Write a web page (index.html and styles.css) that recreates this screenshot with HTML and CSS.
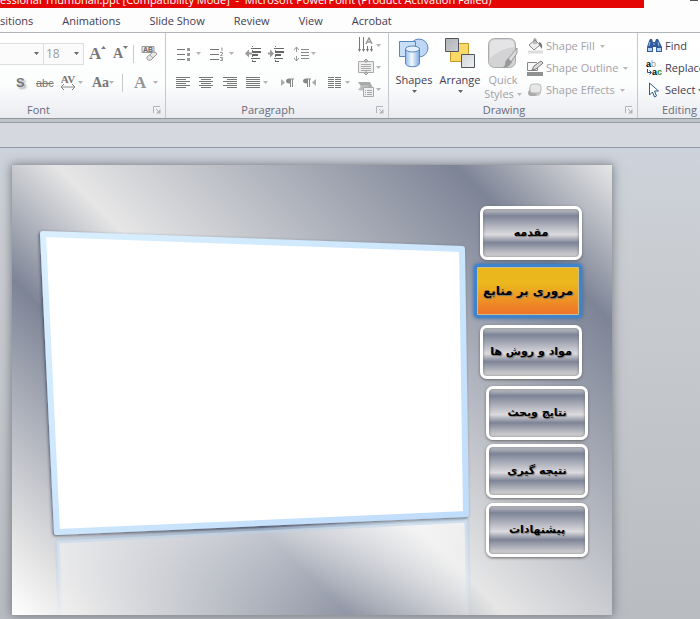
FILE: index.html
```
<!DOCTYPE html>
<html lang="en">
<head>
<meta charset="utf-8">
<title>Microsoft PowerPoint</title>
<link rel="stylesheet" href="styles.css">
</head>
<body>
<svg class="defs" aria-hidden="true">
  <symbol id="caret" viewBox="0 0 5 3"><path d="M0 0h5L2.500 3z" fill="currentColor"/></symbol>
  <symbol id="launch" viewBox="0 0 8 8"><path d="M.5 7V.5H7M3 3l3 3" fill="none" stroke="#b0b3b8"/><path d="M7.500 3v4.500H3z" fill="#b0b3b8"/></symbol>
</svg>

<header class="titlebar"><div class="title">essional Thumbnail.ppt [Compatibility Mode]&nbsp; -&nbsp; Microsoft PowerPoint (Product Activation Failed)</div><span class="minimize"></span></header>

<nav class="tabs">
  <a href="#">sitions</a><a href="#">Animations</a><a href="#">Slide Show</a><a href="#">Review</a><a href="#">View</a><a href="#">Acrobat</a>
</nav>

<main class="ribbon">
  <section class="group font-group">
    <div class="tools">
      <div class="row font-top">
        <label class="combo"><select aria-label="Font"><option></option></select><svg class="caret"><use href="#caret"/></svg></label>
        <label class="combo"><select aria-label="Font size"><option>18</option></select><svg class="caret"><use href="#caret"/></svg></label>
        <button class="glyph big">A<svg class="mark" viewBox="0 0 5 3"><path d="M0 3h5L2.500 0z" fill="#777"/></svg></button>
        <button class="glyph">A<svg class="mark"><use href="#caret"/></svg></button>
        <i class="sep"></i>
        <button aria-label="Clear formatting"><svg width="17" height="17" viewBox="0 0 17 17"><path d="M1 1.500h12v6H1z" fill="#eee" stroke="#999"/><text x="2" y="7" font-size="7" font-weight="bold" font-family="Liberation Sans" fill="#666">AB</text><path d="M6 12l6-5q4 0 4 2l-6 6q-5 1-4-3z" fill="#e6e6e6" stroke="#999"/><path d="M9 10l3 3" stroke="#aaa"/></svg></button>
      </div>
      <div class="row font-bottom">
        <button class="glyph sans shadowed">S</button>
        <button class="glyph small"><s>abc</s></button>
        <button class="glyph small spacing">AV<svg width="16" height="6" viewBox="0 0 16 6"><path d="M1 3h14M4 0L1 3l3 3M12 0l3 3-3 3" fill="none" stroke="#888"/></svg></button>
        <svg class="caret light"><use href="#caret"/></svg>
        <button class="glyph">Aa</button>
        <svg class="caret light"><use href="#caret"/></svg>
        <i class="sep"></i>
        <button class="glyph big faded">A</button>
        <svg class="caret light"><use href="#caret"/></svg>
      </div>
    </div>
    <footer><span>Font</span><svg class="launch"><use href="#launch"/></svg></footer>
  </section>

  <section class="group para-group">
    <div class="tools">
      <div class="row para-top">
        <button aria-label="Bullets"><svg width="14" height="14" viewBox="0 0 14 14"><path d="M0 2.500h8M0 7.500h8M0 12.500h8" stroke="#777"/><path d="M10 1h3v3h-3zM10 6h3v3h-3zM10 11h3v3h-3z" fill="#999"/></svg></button>
        <svg class="caret light"><use href="#caret"/></svg>
        <button aria-label="Numbering"><svg width="14" height="14" viewBox="0 0 14 14"><path d="M0 2.500h9M0 7.500h9M0 12.500h9" stroke="#777"/><path d="M11 1h1v3M10 5.500h2.500v1.500l-2 1.500h2M10 10.500h2.500v3H10M11 12h1" fill="none" stroke="#999"/></svg></button>
        <svg class="caret light"><use href="#caret"/></svg>
        <button aria-label="Decrease indent"><svg width="16" height="16" viewBox="0 0 16 16"><path d="M6 2.500h10M6 12.500h9M7 15.500h4" stroke="#666"/><path d="M7 6h9M7 9h6" stroke="#666" stroke-width="2"/><path d="M7.500 0v16" stroke="#777" stroke-dasharray="1 1"/><path d="M0 7.500l4-4v3h3v2H4v3z" fill="#999"/></svg></button>
        <button aria-label="Increase indent"><svg width="16" height="16" viewBox="0 0 16 16"><path d="M6 2.500h10M6 12.500h9M7 15.500h4" stroke="#666"/><path d="M7 6h9M7 9h6" stroke="#666" stroke-width="2"/><path d="M7.500 0v16" stroke="#777" stroke-dasharray="1 1"/><path d="M6 7.500l-4-4v3H0v2h2v3z" fill="#999"/></svg></button>
        <button aria-label="Line spacing"><svg width="16" height="16" viewBox="0 0 16 16"><path d="M7 3.500h8M7 6.500h8M7 9.500h8M7 12.500h8" stroke="#888"/><path d="M2.500 1v5M2.500 10v5M0 4l2.500-3L5 4M0 12l2.500 3L5 12" fill="none" stroke="#999"/></svg></button>
        <svg class="caret light"><use href="#caret"/></svg>
      </div>
      <div class="row para-bottom">
        <button aria-label="Align left"><svg width="14" height="12" viewBox="0 0 14 12"><path d="M0 .5h14M0 2.500h10M0 4.500h14M0 6.500h10M0 8.500h14M0 10.500h10" stroke="#777"/></svg></button>
        <button aria-label="Center"><svg width="14" height="12" viewBox="0 0 14 12"><path d="M0 .5h14M2 2.500h10M0 4.500h14M2 6.500h10M0 8.500h14M2 10.500h10" stroke="#777"/></svg></button>
        <button aria-label="Align right"><svg width="14" height="12" viewBox="0 0 14 12"><path d="M0 .5h14M4 2.500h10M0 4.500h14M4 6.500h10M0 8.500h14M4 10.500h10" stroke="#777"/></svg></button>
        <button aria-label="Justify"><svg width="14" height="12" viewBox="0 0 14 12"><path d="M0 .5h14M0 2.500h14M0 4.500h14M0 6.500h14M0 8.500h14M0 10.500h14" stroke="#777"/></svg></button>
        <svg class="caret light"><use href="#caret"/></svg>
        <button aria-label="Left to right"><svg width="13" height="10" viewBox="0 0 13 10"><path d="M0 1v7l4-3.500z" fill="#aaa"/><path d="M5 3q0-2.500 3-2.500h5v1h-1V9h-1V1.500h-1V9H9V5.500q-4 0-4-2.500z" fill="#888"/></svg></button>
        <button aria-label="Right to left"><svg width="13" height="10" viewBox="0 0 13 10"><path d="M13 1v7L9 4.500z" fill="#aaa"/><path d="M0 3Q0 .5 3 .5h5v1H7V9H6V1.500H5V9H4V5.500Q0 5.500 0 3z" fill="#888"/></svg></button>
        <button aria-label="Columns"><svg width="14" height="12" viewBox="0 0 14 12"><path d="M0 .5h6m1 0h6M0 2.500h6m1 0h6M0 4.500h6m1 0h6M0 6.500h6m1 0h6M0 8.500h6m1 0h6M0 10.500h6m1 0h6" stroke="#777"/></svg></button>
        <svg class="caret light"><use href="#caret"/></svg>
      </div>
    </div>
    <div class="stack">
      <button aria-label="Text direction"><svg width="16" height="16" viewBox="0 0 16 16"><path d="M1.500 0v14M5.500 0v14M9.500 9v5M13.500 9v5" stroke="#777"/><path d="M0 12h3l-1.500 3zM4 12h3l-1.500 3zM8 12h3l-1.500 3zM12 12h3l-1.500 3z" fill="#777"/><path d="M8 7l3-6 3 6M9 5h4" fill="none" stroke="#999" stroke-width="1.500"/></svg><svg class="caret light"><use href="#caret"/></svg></button>
      <button aria-label="Align text"><svg width="16" height="16" viewBox="0 0 16 16"><path d="M.5 2.500h15v11H.5z" fill="#eee" stroke="#aaa"/><path d="M3 5.500h10M3 7.500h10M3 9.500h10M3 11.500h10" stroke="#aaa"/><path d="M8 0v4M6 2l2-2 2 2M8 16v-4M6 14l2 2 2-2" stroke="#999" fill="none"/></svg><svg class="caret light"><use href="#caret"/></svg></button>
      <button aria-label="Convert to SmartArt"><svg width="16" height="16" viewBox="0 0 16 16"><path d="M0 1h12l3 6H4z" fill="#aaa"/><path d="M0 9l4-5h7l-3 6z" fill="#bbb"/><path d="M5.500 6.500h10v9h-10z" fill="#f0f0f0" stroke="#aaa"/><path d="M7 9.500h1M9 9.500h5M7 11.500h1M9 11.500h5M7 13.500h1M9 13.500h5" stroke="#aaa"/></svg><svg class="caret light"><use href="#caret"/></svg></button>
    </div>
    <footer><span>Paragraph</span><svg class="launch"><use href="#launch"/></svg></footer>
  </section>

  <section class="group draw-group">
    <div class="large-tools">
      <button class="large"><svg width="30" height="30" viewBox="0 0 30 30"><defs><linearGradient id="blue" x2="1"><stop stop-color="#8db9ed"/><stop offset=".45" stop-color="#f5faff"/><stop offset="1" stop-color="#79a8e0"/></linearGradient></defs><circle cx="20" cy="10" r="9" fill="#bdd7f5" stroke="#5986bd"/><path d="M.5 3.500h16v15H.5z" fill="#c9dff7" stroke="#5986bd"/><path d="M6.500 11v14c0 5 14 5 14 0V11z" fill="url(#blue)" stroke="#5986bd"/><ellipse cx="13.500" cy="11" rx="7" ry="3" fill="#e6f1fd" stroke="#5986bd"/></svg><span>Shapes</span><svg class="caret"><use href="#caret"/></svg></button>
      <button class="large"><svg width="30" height="30" viewBox="0 0 30 30"><defs><linearGradient id="steel" x2="1" y2="1"><stop stop-color="#aeb3b8"/><stop offset="1" stop-color="#eef0f2"/></linearGradient></defs><path d="M5.500 5.500h18v18h-18z" fill="#fbd968" stroke="#c59b28"/><path d="M.5.500h13v13H.5zM16.500 16.500h13v13h-13z" fill="url(#steel)" stroke="#50565c"/></svg><span>Arrange</span><svg class="caret"><use href="#caret"/></svg></button>
      <button class="large disabled"><svg width="30" height="30" viewBox="0 0 30 30"><rect x=".5" y=".5" width="27" height="29" rx="6" fill="#d3d3d5" stroke="#aaa"/><path d="M2 7q0-5 5-5h14q5 0 5 5v2Q14 10 2 20z" fill="#e4e4e6"/><path d="M29 10L20 21l3 3 6-9z" fill="#ddd" stroke="#999"/><path d="M20 20l4 4q-3 6-9 5 3-2 2-5z" fill="#999"/></svg><span>Quick</span><span class="second">Styles<svg class="caret"><use href="#caret"/></svg></span></button>
      <div class="shape-list">
        <button><svg width="16" height="16" viewBox="0 0 16 16"><path d="M1 12.500h15v3H1z" fill="#ddd"/><path d="M2 7l6-5 5 5-6 5z" fill="#eee" stroke="#888"/><path d="M7 6V1q2-1 2 1v4" fill="none" stroke="#888"/><path d="M12 4q4 1 3 7l-3-4z" fill="#777"/></svg><span>Shape Fill</span><svg class="caret"><use href="#caret"/></svg></button>
        <button><svg width="16" height="16" viewBox="0 0 16 16"><path d="M10 2.500H.5v8h10V8" fill="#f8f8f8" stroke="#888"/><path d="M5 10l2-4 7-5 2 2-7 6z" fill="#ddd" stroke="#777"/><path d="M0 12h16v4H0z" fill="#909090"/></svg><span>Shape Outline</span><svg class="caret"><use href="#caret"/></svg></button>
        <button><svg width="16" height="16" viewBox="0 0 16 16"><rect x="2" y="4" width="12" height="10" rx="4" fill="#ccc"/><rect x="1" y="8" width="9" height="6" rx="3" fill="#aaa"/><rect x="3" y="2" width="11" height="9" rx="3" fill="#e6e6e6" stroke="#bbb"/></svg><span>Shape Effects</span><svg class="caret"><use href="#caret"/></svg></button>
      </div>
    </div>
    <footer><span>Drawing</span><svg class="launch"><use href="#launch"/></svg></footer>
  </section>

  <section class="group edit-group">
    <div class="edit-list">
      <button><svg width="16" height="16" viewBox="0 0 16 16"><path d="M3 3l1-2h2l1 3h2l1-3h2l1 2 3 6v5h-6V9H7v5H1V9z" fill="#315b9d"/><path d="M2 10h4v3H2zM11 10h4v3h-4z" fill="#b8d1ef"/><path d="M4 4L3 8M12 4l1 4M7 6h2" stroke="#9dbce5"/></svg><span>Find</span></button>
      <button><svg width="16" height="16" viewBox="0 0 16 16"><g font-family="Liberation Sans" font-weight="bold" font-size="9"><text x="0" y="7">a</text><text x="5" y="7" fill="#999" font-weight="normal">b</text><text x="6" y="15">a</text><text x="11" y="15" fill="#159326">c</text></g><path d="M1.500 9v3.500H5M3.500 10.500l2 2-2 2" fill="none" stroke="#234d87"/></svg><span>Replace</span></button>
      <button><svg width="16" height="16" viewBox="0 0 16 16"><path d="M3.500 1v12l3-3 2 5 2-1-2-5h4z" fill="#fff" stroke="#315b8f"/></svg><span>Select</span><svg class="caret"><use href="#caret"/></svg></button>
    </div>
    <footer><span>Editing</span></footer>
  </section>
</main>

<div class="ribbon-edge"></div>
<div class="ruler"></div>

<div class="workspace">
  <article class="slide">
    <svg class="artwork" viewBox="0 0 600 450" aria-hidden="true">
      <defs>
        <linearGradient id="frame" x2="1" y2="1"><stop stop-color="#d9effe"/><stop offset="1" stop-color="#bfdcfb"/></linearGradient>
        <linearGradient id="fade" gradientUnits="userSpaceOnUse" x1="0" y1="355" x2="0" y2="480"><stop stop-color="#fff" stop-opacity=".6"/><stop offset="1" stop-color="#fff" stop-opacity="0"/></linearGradient>
        <linearGradient id="fade-blue" gradientUnits="userSpaceOnUse" x1="0" y1="355" x2="0" y2="450"><stop stop-color="#b8d0e8" stop-opacity=".6"/><stop offset="1" stop-color="#b8d6f3" stop-opacity=".05"/></linearGradient>
        <filter id="soft" x="-5%" y="-5%" width="110%" height="110%"><feDropShadow dx="-1" dy="1" stdDeviation="1.500" flood-color="#26344e" flood-opacity=".7"/></filter>
      </defs>
      <path d="M45 376L455 355L457 470H49z" fill="url(#fade)" stroke="url(#fade-blue)" stroke-width="5" stroke-linejoin="round"/>
      <path d="M31 69L450 84L454 349L45 367z" fill="#fff" stroke="url(#frame)" stroke-width="6" stroke-linejoin="round" filter="url(#soft)"/>
    </svg>
    <div class="slide-menu" lang="fa" dir="rtl">
      <button class="item intro">مقدمه</button>
      <button class="item review">مروری بر منابع</button>
      <button class="item methods">مواد و روش ها</button>
      <button class="item results">نتایج وبحث</button>
      <button class="item conclusion">نتیجه گیری</button>
      <button class="item proposals">پیشنهادات</button>
    </div>
  </article>
</div>
</body>
</html>
```
FILE: styles.css
```
* { box-sizing: border-box; }

body {
  margin: 0;
  min-height: 100vh;
  display: flex;
  flex-direction: column;
  overflow: hidden;
  background: #fdfdfd;
  color: #443c52;
  font: 11px/14px "Open Sans", "Noto Sans", sans-serif;
}

button {
  display: flex;
  align-items: center;
  padding: 0;
  border: 0;
  background: none;
  color: inherit;
  font: inherit;
  white-space: nowrap;
}

svg { display: block; flex: none; }
.defs { position: absolute; width: 0; height: 0; }

.caret { width: 5px; height: 3px; color: #666; }
.caret.light { color: #b4b4b4; }
.launch { width: 8px; height: 8px; }

/* Window title */
.titlebar {
  display: flex;
  justify-content: space-between;
  height: 8px;
  padding-right: 2px;
}
.title {
  display: flex;
  align-items: flex-end;
  width: 644px;
  max-width: 94%;
  height: 8px;
  padding-bottom: 2px;
  overflow: hidden;
  background: #e40505;
  color: #fff;
  line-height: 12px;
  white-space: nowrap;
}
.minimize { width: 8px; height: 1px; background: #555; }

/* Tabs */
.tabs {
  display: flex;
  align-items: center;
  gap: 29px;
  height: 25px;
  padding-top: 2px;
  border-bottom: 1px solid #b1b4b9;
}
.tabs a { color: inherit; text-decoration: none; white-space: nowrap; }

/* Ribbon */
.ribbon {
  display: grid;
  grid-template-columns: 166px 223px 249px 1fr;
  height: 85px;
  overflow: hidden;
  background: linear-gradient(#fff, #fcfdfd 60%, #e9ecf0);
}
.group {
  display: grid;
  grid-template-rows: 1fr 17px;
  border-right: 1px solid #c5c8cd;
}
.group footer {
  grid-column: 1 / -1;
  grid-row: 2;
  display: flex;
  align-items: center;
  justify-content: center;
  position: relative;
  color: #6a6a7c;
}
.group footer .launch { position: absolute; right: 4px; bottom: 4px; }

.row { display: grid; align-items: center; justify-items: start; height: 29px; }
.tools { padding-top: 6px; }

.font-top { grid-template-columns: 44px 45px 24px 20px 8px 1fr; }
.font-bottom { grid-template-columns: 20px 24px 18px 14px 17px 13px 12px 19px 1fr; padding-left: 16px; }
.font-group footer { padding-right: 88px; }

.combo {
  display: flex;
  align-items: center;
  width: 100%;
  height: 22px;
  padding-right: 4px;
  border: 1px solid #dcdee1;
  border-left: 0;
  background: #fbfbfb;
}
.font-top .combo + .combo { width: 40px; }
.combo select {
  flex: 1;
  min-width: 0;
  appearance: none;
  padding: 0 2px;
  border: 0;
  background: none;
  color: #9a9a9a;
  font: inherit;
  font-size: 12px;
}

.sep { width: 1px; height: 18px; background: #c9c9c9; }

.glyph {
  color: #777;
  font: bold 14px/16px "Liberation Serif", serif;
}
.glyph.big { font-size: 17px; }
.glyph.small { font-size: 11px; }
.glyph.sans { font-family: "Liberation Sans", sans-serif; font-size: 13px; }
.glyph.faded { color: #959595; }
.glyph.shadowed { text-shadow: 2px 2px 2px #aaa; }
.glyph s { font-family: "Liberation Sans", sans-serif; font-weight: normal; }
.glyph .mark { width: 5px; height: 3px; align-self: flex-start; }
.spacing { flex-direction: column; line-height: 9px; }

.para-group { grid-template-columns: 192px 1fr; }
.para-top { grid-template-columns: 19px 14px 19px 16px 23px 26px 17px 1fr; padding-left: 11px; }
.para-bottom { grid-template-columns: 23px 24px 23px 17px 18px 22px 25px 17px 1fr; padding-left: 10px; }
.stack { display: grid; grid-template-rows: repeat(3, 22px); padding-top: 1px; }
.stack button { gap: 2px; }
.para-group footer { padding-right: 18px; }

.large-tools { display: grid; grid-template-columns: 50px 42px 44px 1fr; }
.large {
  flex-direction: column;
  width: 52px;
  padding-top: 5px;
  justify-self: center;
}
.large > span { margin-top: 4px; line-height: 15px; }
.large > .caret { margin-top: 3px; }
.large > .second { display: flex; align-items: center; gap: 3px; margin-top: 0; line-height: 14px; }
.large.disabled, .shape-list { color: #a3a1a6; }
.large.disabled .caret, .shape-list .caret { color: #b9b9b9; }
.shape-list, .edit-list { display: grid; grid-template-rows: repeat(3, 22px); padding-top: 2px; }
.shape-list { padding-left: 2px; }
.shape-list button { gap: 3px; }
.shape-list .caret { margin-left: 2px; }
.edit-list button { gap: 3px; }
.draw-group footer { padding-right: 18px; }

.edit-group { border-right: 0; }
.edit-list { padding-left: 8px; }
.edit-group footer { justify-content: flex-start; padding-left: 24px; }

.ribbon-edge {
  height: 5px;
  border-top: 1px solid #92969d;
  border-bottom: 1px solid #969ca8;
  background: #bec2c9;
}
.ruler {
  height: 25px;
  border-bottom: 1px solid #9299a8;
  background: #d5d9df;
}

/* Slide area */
.workspace {
  flex: 1;
  padding: 17px 88px 4px 12px;
  background: linear-gradient(#cdd3dc, #cacdd2 20%, #b9bcc1);
}
.slide {
  position: relative;
  aspect-ratio: 4 / 3;
  background: linear-gradient(45deg, #fff, #e6e6e6 7%, #7d8496 32%, #e6e6e6 47%, #7d8496 85%, #e6e6e6);
  box-shadow: 0 0 2px #999, 0 0 10px 1px rgba(75, 80, 90, .6);
}
.artwork { position: absolute; inset: 0; width: 100%; height: 100%; }

.item {
  position: absolute;
  display: block;
  left: 78%;
  width: 17%;
  height: 12%;
  border: 3px solid #fff;
  border-radius: 7px;
  background: linear-gradient(#e2e2e2, #7d8496 18%, #dcdbdf 53%, #7d8496 68%, #d6d5d6 93%, #eee);
  background-origin: border-box;
  box-shadow: 0 1px 3px #666, inset 0 0 3px #777;
  color: #000;
  font: bold 11px/18px "DejaVu Sans", sans-serif;
  text-align: center;
  text-shadow: 1px 1px 1px #777;
}
.intro { top: 9%; }
.review {
  left: 77%;
  top: 22%;
  width: 18%;
  border-color: #3f83cc;
  border-radius: 4px;
  background: linear-gradient(#eab71d 35%, #f0702b);
  box-shadow: 0 0 4px #2666b5, inset 0 0 0 1px #c9c08d;
  font-size: 12px;
}
.methods { top: 35.500%; }
.results { top: 49%; left: 79%; }
.conclusion { top: 62%; left: 79%; }
.proposals { top: 75%; left: 79%; }
```
